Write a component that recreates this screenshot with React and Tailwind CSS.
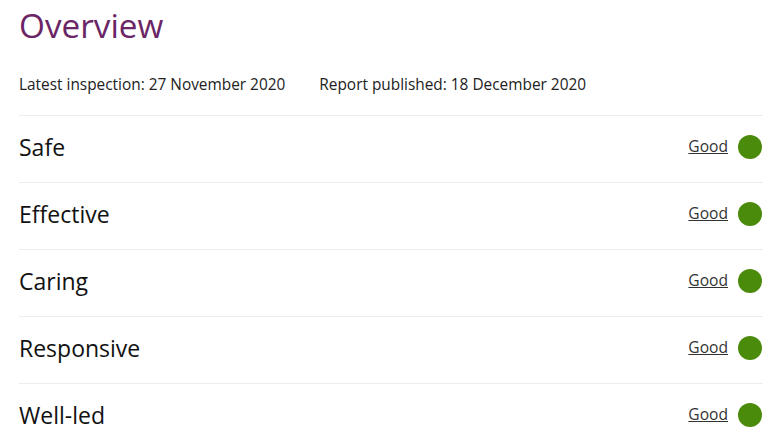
const ratings = ['Safe', 'Effective', 'Caring', 'Responsive', 'Well-led']

export default function App() {
  return (
    <div className="bg-white w-[782px] h-[440px] overflow-hidden px-[19px] text-[#222] font-['Open_Sans',sans-serif]">
      <h1 className="text-[33.3px] leading-[50px] text-[#6b2566]">Overview</h1>
      <div className="flex gap-[34px] text-[15.4px] leading-6 mt-[23px] text-[#222]">
        <span>Latest inspection: 27 November 2020</span>
        <span>Report published: 18 December 2020</span>
      </div>
      <div className="mt-[18px]">
        {ratings.map(r => (
          <div key={r} className="flex items-center justify-between border-t border-[#ececec] h-[67px] pb-1">
            <span className="text-[23px] text-[#111]">{r}</span>
            <div className="flex items-center gap-[10px] pr-px">
              <a href="#" className="text-[15.6px] underline text-[#333]">Good</a>
              <span className="w-6 h-6 rounded-full bg-[#4b8b0b]" />
            </div>
          </div>
        ))}
      </div>
    </div>
  )
}
